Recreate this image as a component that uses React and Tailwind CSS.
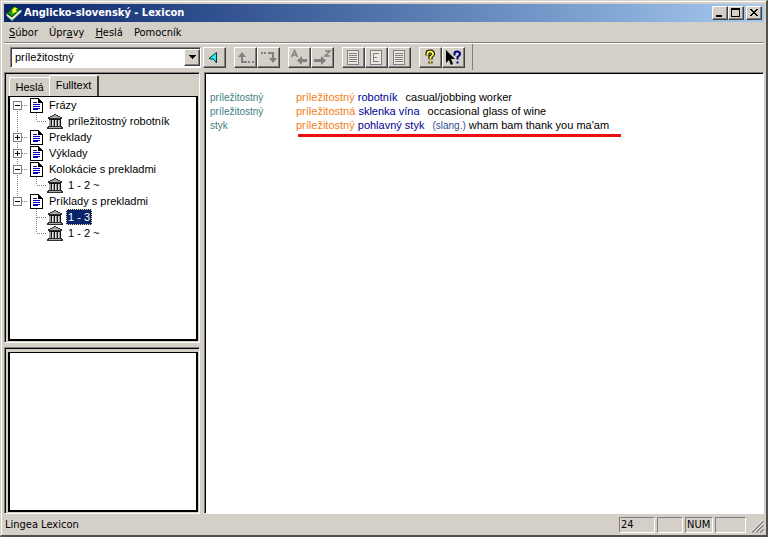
import React, { useState } from "react";

const UI_FONT = "font-['DejaVu_Sans_Condensed','Noto_Sans',sans-serif]";
const RAISED =
  "border border-t-white border-l-white border-r-[#404040] border-b-[#404040] shadow-[inset_-1px_-1px_0_#808080]";
const SUNKEN =
  "border-t border-l border-t-[#808080] border-l-[#808080] border-r border-b border-r-white border-b-white";
const THIN_SUNKEN = "border border-t-[#808080] border-l-[#808080] border-r-white border-b-white";

function AppIcon() {
  return (
    <svg width="16" height="16" viewBox="0 0 16 16" aria-hidden="true">
      <path d="M1 8 V11 L6 15.500 L15 7 V5" fill="#f0f4e8" stroke="#d8e0d0" strokeWidth="1" />
      <path d="M1 8.500 L8 1 L14 4.500 L6 12 Z" fill="#109010" stroke="#003800" />
      <path d="M8 2.500 L11.500 3 L9.500 5 L11 6.500 L5.500 9 L7 6.500 L5.500 6 Z" fill="#ffff30" />
      <path d="M1 11.500 L6 15.500 L15 7.500" fill="none" stroke="#308030" strokeWidth="0.800" />
    </svg>
  );
}

function WindowButton({ label, children }) {
  return (
    <button type="button" aria-label={label} className={`flex h-[14px] w-4 items-center justify-center bg-[#d4d0c8] ${RAISED}`}>
      <svg width="12" height="12" viewBox="0 0 12 12" shapeRendering="crispEdges" className="shrink-0">
        {children}
      </svg>
    </button>
  );
}

function TitleBar() {
  return (
    <header className="flex h-[18px] shrink-0 items-center bg-linear-to-r from-[#0a246a] to-[#a6caf0] px-[2px]">
      <AppIcon />
      <h1 className="ml-[2px] grow truncate font-['DejaVu_Sans_Condensed','Noto_Sans',sans-serif] text-[11px] font-bold text-white">
        Anglicko-slovenský - Lexicon
      </h1>
      <div className="flex">
        <WindowButton label="Minimize">
          <path d="M2 8h6v2H2z" />
        </WindowButton>
        <WindowButton label="Maximize">
          <path d="M1 1h9v9H1zM2 3v6h7V3z" fillRule="evenodd" />
        </WindowButton>
        <span className="w-[2px]" />
        <WindowButton label="Close">
          <path d="M2 2h2v1h1v1h2V3h1V2h2v1H9v1H8v1H7v1h1v1h1v1h1v1H8V8H7V7H5v1H4v1H2V8h1V7h1V6h1V5H4V4H3V3H2z" />
        </WindowButton>
      </div>
    </header>
  );
}

function MenuBar() {
  return (
    <nav className={`flex h-5 shrink-0 items-center gap-[11px] px-[5px] pt-[2px] ${UI_FONT} text-[11px]`}>
      <button type="button"><u>S</u>úbor</button>
      <button type="button">Úpr<u>a</u>vy</button>
      <button type="button"><u>H</u>eslá</button>
      <button type="button">Pomocník</button>
    </nav>
  );
}

function ToolButton({ label, children }) {
  return (
    <button type="button" aria-label={label} className={`flex h-[21px] w-[23px] items-center justify-center ${RAISED}`}>
      <svg width="19" height="17" viewBox="0 0 19 17" className="shrink-0" fill="none" stroke="#808080" strokeWidth="2">
        {children}
      </svg>
    </button>
  );
}

function PageGlyph({ lines }) {
  return (
    <g strokeWidth="1" shapeRendering="crispEdges">
      <path d="M3.500 1.500h11v14h-11z" fill="#ece9e2" />
      <path d={lines} />
    </g>
  );
}

const FULL_LINES = "M5 4.500h8M5 6.500h8M5 8.500h8M5 10.500h8M5 12.500h8";
const PART_LINES = "M6 4.500h6M6 8.500h4M6 12.500h6M6.500 4v9";

function QuestionGlyph({ x, fill, outline }) {
  const d = "M1.500 5.500 V3.500 Q1.500 1.500 4 1.500 Q7 1.500 7 4 Q7 5.500 4.500 7 V9.500 M4.500 11.500 V13.500";
  return (
    <g transform={`translate(${x} 1)`}>
      {outline && <path d={d} stroke={outline} strokeWidth="4" />}
      <path d={d} stroke={fill} strokeWidth="2" />
    </g>
  );
}

function Toolbar() {
  const [query, setQuery] = useState("príležitostný");
  return (
    <div className="flex h-[29px] shrink-0 items-center border-t border-t-white pb-[2px] pl-[6px]">
      <div className={`mr-[2px] flex h-[21px] w-[191px] bg-white ${SUNKEN} shadow-[inset_1px_1px_0_#404040]`}>
        <input
          aria-label="Hľadať"
          value={query}
          onChange={(e) => setQuery(e.target.value)}
          className="min-w-0 grow bg-transparent pl-[4px] font-['Liberation_Sans',Arial,sans-serif] text-[11px] outline-none"
        />
        <button type="button" aria-label="História" className={`my-px flex w-4 items-center justify-center bg-[#d4d0c8] ${RAISED}`}>
          <svg width="7" height="4" viewBox="0 0 7 4" shapeRendering="crispEdges" className="shrink-0">
            <path d="M0 0h7v1H6v1H5v1H4v1H3V3H2V2H1V1H0z" />
          </svg>
        </button>
      </div>
      <ToolButton label="Vyhľadať">
        <path d="M4 9.500 L11.500 3.500 V14 L9 10.500 Z" fill="#20f0f0" stroke="#003838" strokeWidth="1" />
      </ToolButton>
      <div className="ml-2 flex">
        <ToolButton label="Späť">
          <path d="M6 6v7h5M12 13h2M16 13h2" />
          <path d="M2 8l4-5l4 5z" fill="#808080" stroke="none" />
        </ToolButton>
        <ToolButton label="Dopredu">
          <path d="M2 4h2M5 4h2M9 4h5v6" />
          <path d="M10 9h8l-4 5z" fill="#808080" stroke="none" />
        </ToolButton>
      </div>
      <div className="ml-2 flex">
        <ToolButton label="Predchádzajúce heslo">
          <path d="M1.500 8 L4.500 1.500 L7.500 8 M3 6h3" strokeWidth="1.500" />
          <path d="M10 11.500h7" strokeWidth="3" />
          <path d="M12 7v9l-5-4.500z" fill="#808080" stroke="none" />
        </ToolButton>
        <ToolButton label="Nasledujúce heslo">
          <path d="M12 2h5l-5 5h5" strokeWidth="1.500" />
          <path d="M1 11.500h8" strokeWidth="3" />
          <path d="M8 7v9l5-4.500z" fill="#808080" stroke="none" />
        </ToolButton>
      </div>
      <div className="ml-2 flex">
        <ToolButton label="Celé heslo"><PageGlyph lines={FULL_LINES} /></ToolButton>
        <ToolButton label="Frázy"><PageGlyph lines={PART_LINES} /></ToolButton>
        <ToolButton label="Preklady"><PageGlyph lines={FULL_LINES} /></ToolButton>
      </div>
      <div className="ml-2 flex">
        <ToolButton label="Pomocník"><QuestionGlyph x={5} fill="#f8f040" outline="#000000" /></ToolButton>
        <ToolButton label="Kontextová pomoc">
          <path d="M2 1v13l3-3 2 5 2-1-2-5h4z" fill="#000000" stroke="none" />
          <QuestionGlyph x={9} fill="#000080" />
        </ToolButton>
      </div>
      <div className="ml-[7px] h-full w-px bg-[#808080]" />
    </div>
  );
}

function DocIcon() {
  return (
    <svg width="13" height="15" viewBox="0 0 13 15" shapeRendering="crispEdges" className="shrink-0" aria-hidden="true">
      <path d="M1 1h7l4 4v9H1z" fill="#ffffff" />
      <path d="M0 0h9v1h1v1h1v1h1v1h1v11H0zM1 1v13h11V5H8V1z" fillRule="evenodd" />
      <path d="M3 4h4v1H3zM3 6h7v1H3zM3 8h7v1H3zM3 10h7v1H3zM3 12h5v-1H3z" fill="#0000c0" />
    </svg>
  );
}

function TempleIcon() {
  return (
    <svg width="16" height="15" viewBox="0 0 16 15" shapeRendering="crispEdges" className="shrink-0" aria-hidden="true">
      <path d="M7 0h2v1h2v1h2v1h2v2H1V3h2V2h2V1h2z" fill="#303030" />
      <path d="M7 1h2v1h2v1h2v1H3V3h2V2h2z" fill="#a8a8a8" />
      <path d="M2 5h12v7H2z" fill="#a0a0a0" />
      <path d="M4 5h1v7H4zM7 5h1v7H7zM10 5h1v7h-1zM13 5h1v7h-1zM2 5h12v1H2z" fill="#101010" />
      <path d="M5 6h1v6H5zM8 6h1v6H8zM11 6h1v6h-1z" fill="#e8e8e8" />
      <path d="M1 12h14v1h1v2H0v-2h1z" fill="#303030" />
      <path d="M2 13h12v1H2z" fill="#a8a8a8" />
    </svg>
  );
}

function Expander({ open, first, last }) {
  return (
    <svg width="20" height="16" viewBox="0 0 20 16" shapeRendering="crispEdges" className="shrink-0" stroke="#808080" fill="none">
      {!first && <path d="M7.500 0V4" strokeDasharray="1 1" />}
      {!last && <path d="M7.500 12V16" strokeDasharray="1 1" />}
      <path d="M12 8.500h6" strokeDasharray="1 1" />
      <path d="M3.500 4.500h8v8h-8z" fill="#ffffff" />
      <path d={open ? "M5 8.500h5" : "M5 8.500h5M7.500 6v5"} stroke="#000000" />
    </svg>
  );
}

function Branch({ last, trunk }) {
  return (
    <svg width="37" height="16" viewBox="0 0 37 16" shapeRendering="crispEdges" className="shrink-0" stroke="#808080" fill="none">
      {trunk && <path d="M7.500 0V16" strokeDasharray="1 1" />}
      <path d={last ? "M26.500 0V8" : "M26.500 0V16"} strokeDasharray="1 1" />
      <path d="M27 8.500h10" strokeDasharray="1 1" />
    </svg>
  );
}

const TREE = [
  { label: "Frázy", open: true, children: ["príležitostný robotník"] },
  { label: "Preklady", open: false, children: [] },
  { label: "Výklady", open: false, children: [] },
  { label: "Kolokácie s prekladmi", open: true, children: ["1 - 2 ~"] },
  { label: "Príklady s prekladmi", open: true, children: ["1 - 3", "1 - 2 ~"] },
];

function Tree() {
  return (
    <ul role="tree" className="grow overflow-hidden border-2 border-t border-black bg-white font-['Liberation_Sans',Arial,sans-serif] text-[11px] leading-4">
      {TREE.map((node, i) => {
        const last = i === TREE.length - 1;
        return (
          <li key={node.label} role="treeitem" aria-expanded={node.open}>
            <div className="flex h-4 items-center">
              <Expander open={node.open} first={i === 0} last={last} />
              <DocIcon />
              <span className="ml-[6px] whitespace-nowrap">{node.label}</span>
            </div>
            {node.children.length > 0 && (
              <ul role="group">
                {node.children.map((child, j) => (
                  <li key={child} role="treeitem" aria-selected={child === "1 - 3"} className="flex h-4 items-center">
                    <Branch last={j === node.children.length - 1} trunk={!last} />
                    <TempleIcon />
                    <span
                      className={
                        child === "1 - 3"
                          ? "ml-[3px] bg-[#0a246a] px-[2px] text-white outline-1 -outline-offset-1 outline-dotted outline-[#f5db95]"
                          : "ml-[3px] px-[2px] whitespace-nowrap"
                      }
                    >
                      {child}
                    </span>
                  </li>
                ))}
              </ul>
            )}
          </li>
        );
      })}
    </ul>
  );
}

function Sidebar() {
  const frame = `flex flex-col ${SUNKEN} shadow-[inset_1px_1px_0_#000000]`;
  return (
    <aside className="flex w-[196px] shrink-0 flex-col gap-1">
      <section className={`${frame} grow pt-[2px] pr-px pb-px pl-[3px]`}>
        <div role="tablist" className="flex h-[21px] shrink-0 items-end px-px font-['Liberation_Sans',Arial,sans-serif] text-[11px]">
          <button type="button" role="tab" aria-selected="false" className="h-[19px] w-10 rounded-tl-[2px] border-t border-l border-white">
            Heslá
          </button>
          <button type="button" role="tab" aria-selected="true" className="h-[21px] w-[50px] rounded-t-[2px] border-t border-r-2 border-l border-t-white border-r-[#404040] border-l-white pb-px">
            Fulltext
          </button>
        </div>
        <Tree />
      </section>
      <section className={`${frame} h-[167px] shrink-0 pt-1 pr-px pb-px pl-[3px]`}>
        <div className="grow border-2 border-t border-black bg-white" />
      </section>
    </aside>
  );
}

const ENTRIES = [
  { head: "príležitostný", match: "príležitostný", rest: "robotník", note: "", text: "casual/jobbing worker" },
  { head: "príležitostný", match: "príležitostná", rest: "sklenka vína", note: "", text: "occasional glass of wine" },
  { head: "styk", match: "príležitostný", rest: "pohlavný styk", note: "(slang.)", text: "wham bam thank you ma'am" },
];

function Results() {
  return (
    <main className={`min-w-0 grow overflow-hidden bg-white ${SUNKEN} shadow-[inset_1px_1px_0_#000000]`}>
      <dl className="grid grid-cols-[86px_1fr] items-baseline pt-[17px] pl-[5px] font-['Liberation_Sans',Arial,sans-serif] text-[11px] leading-[14px]">
        {ENTRIES.map((entry) => (
          <React.Fragment key={entry.match + entry.rest}>
            <dt className="text-[10px] leading-3 text-[#408080]">{entry.head}</dt>
            <dd className="h-[14px] whitespace-nowrap">
              <span className="text-[#f08020]">{entry.match}</span>{" "}
              <span className="text-[#000090]">{entry.rest}</span>
              {entry.note && <span className="ml-2 text-[10px] leading-3 text-[#305090]">{entry.note}</span>}
              <span className={entry.note ? "ml-[3px]" : "ml-2"}>{entry.text}</span>
            </dd>
          </React.Fragment>
        ))}
        <dd aria-hidden="true" className="col-start-2 mt-[2px] ml-[2px] h-[3px] w-[323px] bg-[#e81010]" />
      </dl>
    </main>
  );
}

function StatusBar() {
  return (
    <footer className={`flex h-[21px] shrink-0 items-center ${UI_FONT} text-[11px]`}>
      <span className="grow pt-px pl-px">Lingea Lexicon</span>
      <div className="flex gap-[2px]">
        <span className={`h-4 w-9 pl-px leading-[14px] ${THIN_SUNKEN}`}>24</span>
        <span className={`h-4 w-[26px] ${THIN_SUNKEN}`} />
        <span className={`h-4 w-7 pl-px leading-[14px] ${THIN_SUNKEN}`}>NUM</span>
        <span className={`h-4 w-[31px] ${THIN_SUNKEN}`} />
      </div>
      <svg width="13" height="13" viewBox="0 0 13 13" className="mb-[2px] ml-[5px] self-end" aria-hidden="true">
        <path d="M0 12L12 0M4 12L12 4M8 12L12 8" stroke="#ffffff" />
        <path d="M1 12.500L12.500 1M5 12.500L12.500 5M9 12.500L12.500 9" stroke="#808080" strokeWidth="1.500" />
      </svg>
    </footer>
  );
}

export default function App() {
  return (
    <div className="flex h-screen flex-col border-t border-r-2 border-b-2 border-l border-t-[#d4d0c8] border-r-[#505050] border-b-[#505050] border-l-[#d4d0c8] bg-[#d4d0c8] text-black">
      <div className="flex min-h-0 grow flex-col border-t border-l border-white pt-[2px] pr-[2px] pl-[2px]">
        <TitleBar />
        <MenuBar />
        <div className="h-px shrink-0 bg-[#808080]" />
        <Toolbar />
        <div className="flex min-h-0 grow gap-1">
          <Sidebar />
          <Results />
        </div>
        <StatusBar />
      </div>
    </div>
  );
}
